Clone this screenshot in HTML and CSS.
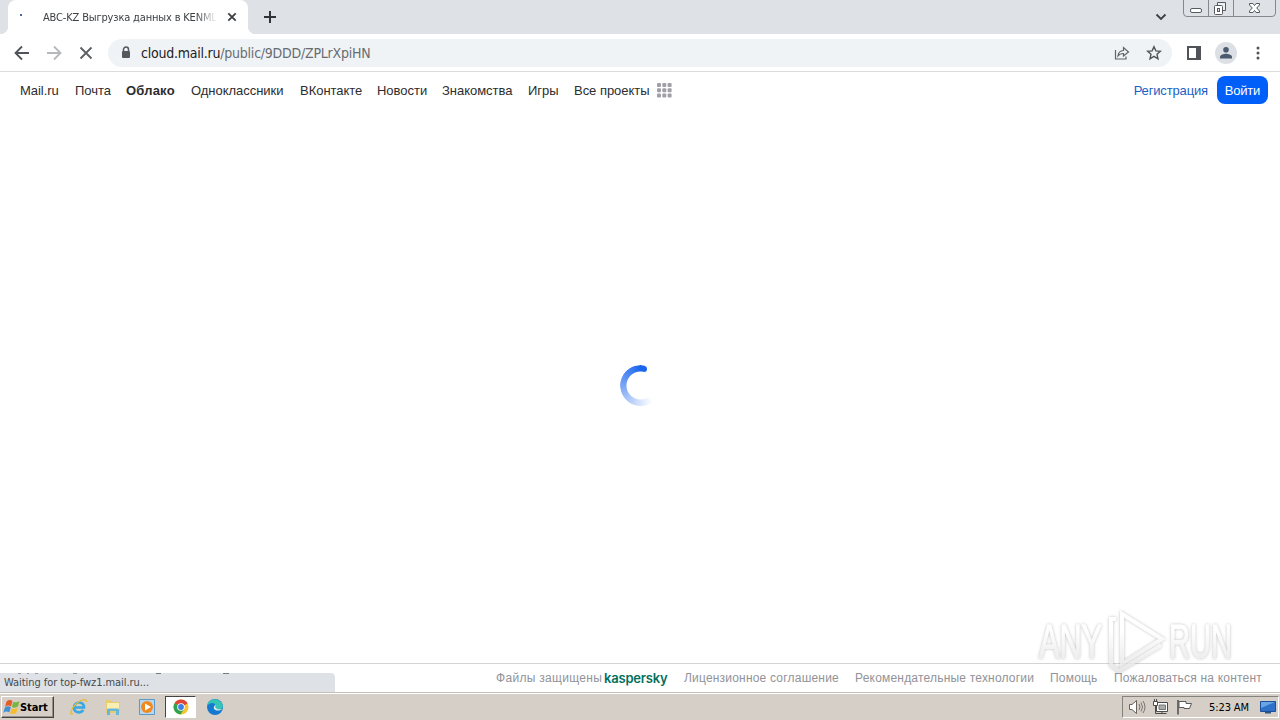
FILE: index.html
```
<!DOCTYPE html>
<html lang="ru">
<head>
    <meta charset="UTF-8">
    <title>ABC-KZ Выгрузка данных в KENML</title>
    <link rel="stylesheet" href="styles.css">
</head>
<body>
    <div class="tabstrip">
        <div class="tab">
            <span class="tab-dot"></span>
            <span class="tab-title">ABC-KZ Выгрузка данных в KENML</span>
            <svg class="tab-close" width="10" height="10" viewBox="0 0 10 10"><path d="M1.3 1.3l7.4 7.4M8.7 1.3L1.3 8.7" stroke="#3c4043" stroke-width="1.8"/></svg>
        </div>
        <svg class="new-tab" width="12" height="12" viewBox="0 0 12 12"><path d="M6 0v12M0 6h12" stroke="#303338" stroke-width="2"/></svg>
        <svg class="tab-search" width="12" height="8" viewBox="0 0 12 8"><path d="M1.5 1.5L6 6l4.500-4.500" fill="none" stroke="#3c4043" stroke-width="1.8"/></svg>
        <svg class="window-buttons" width="94" height="18" viewBox="0 0 94 18">
            <path d="M.5 0v13q0 3.500 3.500 3.500h85q3.500 0 3.500-3.500V0M25.500 0v16M50.500 0v16" fill="none" stroke="#85888e"/>
            <rect x="7.500" y="8.500" width="11" height="4" rx="1.500" fill="#fff" stroke="#575a61"/>
            <path d="M34.500 5V2.500h8v8H40" fill="#eef0f3" stroke="#575a61"/>
            <rect x="31.500" y="5.500" width="8" height="9" rx="1" fill="#fff" stroke="#575a61"/>
            <rect x="34.500" y="8.500" width="2" height="3" fill="#dee1e6" stroke="#575a61"/>
            <path d="M66.500 3.500h3.500l1.500 2 1.500-2h3.500v1.500L73.700 8l2.800 3v1.500H73l-1.500-2-1.500 2h-3.500V11l2.800-3-2.800-3z" fill="#fff" stroke="#575a61"/>
        </svg>
    </div>

    <div class="toolbar">
        <svg class="tool-back" width="16" height="16" viewBox="0 0 16 16"><path d="M15 8H2M8 1.500L1.500 8 8 14.500" fill="none" stroke="#505357" stroke-width="1.8"/></svg>
        <svg class="tool-forward" width="16" height="16" viewBox="0 0 16 16"><path d="M1 8h13M8 1.500L14.500 8 8 14.500" fill="none" stroke="#b6b8ba" stroke-width="1.800"/></svg>
        <svg class="tool-stop" width="14" height="14" viewBox="0 0 14 14"><path d="M1.500 1.500l11 11M12.500 1.500l-11 11" stroke="#5b5e62" stroke-width="1.800"/></svg>
        <div class="address">
            <svg class="lock" width="10" height="13" viewBox="0 0 10 13"><path d="M2.500 6V3.500a2.500 2.500 0 015 0V6" fill="none" stroke="#55595e" stroke-width="1.500"/><rect x="1" y="5" width="8" height="7" rx="1" fill="#55595e"/></svg>
            <span class="url"><span class="host">cloud.mail.ru</span><span class="path">/public/9DDD/ZPLrXpiHN</span></span>
            <svg class="share" width="16" height="14" viewBox="0 0 16 14"><path d="M1.500 4v9h10.500v-2.500M4 10c.3-3.500 2-5.300 5.500-5.500V1.500L14.500 6l-5 4V7.500C7 7.500 5.300 8.200 4 10z" fill="none" stroke="#606368" stroke-width="1.200"/></svg>
            <svg class="star" width="16" height="16" viewBox="0 0 16 16"><path d="M8 1.700l1.900 4.200 4.500.4-3.400 3 1 4.500L8 11.400l-4 2.400 1-4.500-3.400-3 4.500-.4z" fill="none" stroke="#505459" stroke-width="1.400"/></svg>
        </div>
        <svg class="side-panel" width="14" height="14" viewBox="0 0 14 14"><path d="M1 1h12v12H1z" fill="#fff" stroke="#505357" stroke-width="2"/><path d="M9 1h4v12H9z" fill="#505357"/></svg>
        <svg class="profile" width="22" height="22" viewBox="0 0 22 22"><circle cx="11" cy="11" r="11" fill="#dcdfe4"/><circle cx="11" cy="7.700" r="2.800" fill="#4c5a70"/><path d="M5 16.500v-1.500c0-2 4-3.200 6-3.200s6 1.200 6 3.200v1.500z" fill="#4c5a70"/></svg>
        <svg class="dots" width="4" height="14" viewBox="0 0 4 14"><g fill="#505357"><circle cx="2" cy="2" r="1.500"/><circle cx="2" cy="7" r="1.500"/><circle cx="2" cy="12" r="1.500"/></g></svg>
    </div>

    <header class="portal">
        <nav class="portal-nav">
            <a>Mail.ru</a>
            <a>Почта</a>
            <a class="active">Облако</a>
            <a>Одноклассники</a>
            <a>ВКонтакте</a>
            <a>Новости</a>
            <a>Знакомства</a>
            <a>Игры</a>
            <a>Все проекты</a>
        </nav>
        <svg class="projects" width="15" height="15" viewBox="0 0 15 15"><g fill="#a0a0a6"><rect width="4" height="4" rx="1"/><rect x="5.300" width="4" height="4" rx="1"/><rect x="10.600" width="4" height="4" rx="1"/><rect y="5.300" width="4" height="4" rx="1"/><rect x="5.300" y="5.300" width="4" height="4" rx="1"/><rect x="10.600" y="5.300" width="4" height="4" rx="1"/><rect y="10.600" width="4" height="4" rx="1"/><rect x="5.300" y="10.600" width="4" height="4" rx="1"/><rect x="10.600" y="10.600" width="4" height="4" rx="1"/></g></svg>
        <a class="register">Регистрация</a>
        <a class="login">Войти</a>
    </header>

    <main class="content">
        <div class="spinner"></div>
    </main>

    <footer class="footer">
        <span class="secured">Файлы защищены</span>
        <span class="kaspersky">kaspersky</span>
        <a class="license">Лицензионное соглашение</a>
        <a class="recommend">Рекомендательные технологии</a>
        <a class="help">Помощь</a>
        <a class="report">Пожаловаться на контент</a>
        <div class="status">Waiting for top-fwz1.mail.ru...</div>
    </footer>

    <svg class="watermark" width="210" height="74" viewBox="0 0 210 74">
        <defs>
            <linearGradient id="wm" x1="0" y1="0" x2="0" y2="1"><stop offset="0.3" stop-color="#fff"/><stop offset="1" stop-color="#e4e4e4"/></linearGradient>
            <filter id="glow" x="-10%" y="-10%" width="120%" height="120%"><feDropShadow dx="0" dy="0" stdDeviation="1.500" flood-color="#888" flood-opacity=".65"/></filter>
        </defs>
        <g filter="url(#glow)">
            <text class="wm-text" x="7" y="52" textLength="63" lengthAdjust="spacingAndGlyphs">ANY</text>
            <text class="wm-text" x="137" y="52" textLength="63" lengthAdjust="spacingAndGlyphs">RUN</text>
            <path d="M90 8l40 25-40 25zM84 13h-5v46l8 6 42-26" fill="none" stroke="url(#wm)" stroke-width="4"/>
        </g>
    </svg>

    <div class="taskbar">
        <div class="start">
            <svg width="17" height="16" viewBox="0 0 17 16"><path d="M3.500 2.500q3-2.500 6-.5L8 7.500q-3-2-6 .5z" fill="#e35c29"/><path d="M10.300 2.700q3 1.500 6.200-.7L15 7.500q-3 2-6.200.5z" fill="#78b641"/><path d="M1.800 8.700q3-2.500 6-.5l-1.500 5.300q-3-2-6 .5z" fill="#438fd0"/><path d="M8.600 9q3 2 6.200-.5l-1.500 5.500q-3 2-6.200.2z" fill="#f5bd2e"/></svg>
            <span>Start</span>
        </div>
        <svg class="app ie" width="18" height="18" viewBox="0 0 18 18"><path d="M4 9.500h10c.3-6.700-9.700-6.700-10 0 0 5.600 7 6.200 9.300 2.500" fill="none" stroke="#36a9e4" stroke-width="2.600"/><path d="M3 15.500C-1 18 .5 11 6 6s11-6 10.500-2" fill="none" stroke="#e7b936" stroke-width="1.300"/></svg>
        <svg class="app folder" width="18" height="18" viewBox="0 0 18 18"><path d="M2 2h5l1 2h8v11H2z" fill="#e9cc70"/><path d="M3 5h12v6H3z" fill="#faefb2"/><path d="M3 17v-5q0-1.500 1.500-1.500h9q1.500 0 1.500 1.500v5h-3v-4H6v4z" fill="#67b7d8"/></svg>
        <svg class="app media" width="18" height="18" viewBox="0 0 18 18"><path d="M1.500 1.500h15v15h-15z" fill="#b9d8ee" stroke="#5b9ac8"/><circle cx="9" cy="9" r="6" fill="#f08a20"/><path d="M7 5.500l6 3.500-6 3.500z" fill="#fff"/></svg>
        <div class="running">
            <svg width="16" height="16" viewBox="0 0 16 16"><circle cx="8" cy="8" r="7.500" fill="#f7c52c"/><path d="M8 8L1.500 4.250A7.500 7.500 0 0114.500 4.250z" fill="#df4538"/><path d="M8 8L1.500 4.250A7.500 7.500 0 007.500 15.500L11 10z" fill="#31a252"/><path d="M8 4.250h6.500L8 8z" fill="#df4538"/><circle cx="8" cy="8" r="3.800" fill="#fff"/><circle cx="8" cy="8" r="2.900" fill="#3d80e8"/></svg>
        </div>
        <svg class="app edge" width="18" height="18" viewBox="0 0 18 18"><circle cx="9" cy="9" r="8" fill="#1479cf"/><path d="M1 8C2 1 10-1 15 4c3 4 2 7-2 7.500-3 .2-4-1-3-3C9 4 4 4 1 8z" fill="#35c5b5"/><path d="M10 7c-1.500 3 .5 5 6.500 4-1.500 1.500-6 2.500-8.500 0C7.200 9 8.500 7 10 7z" fill="#d4e8ee"/></svg>
        <div class="tray">
            <svg class="volume" width="18" height="16" viewBox="0 0 18 16"><path d="M1.500 5.500H4L8.500 1.500v13L4 10.500H1.500z" fill="#fff" stroke="#66635f"/><path d="M11 5q2 3 0 6M13 3.500q3 4.500 0 9M15 2q4 6 0 12" fill="none" stroke="#77736e"/></svg>
            <svg class="network" width="18" height="16" viewBox="0 0 18 16"><path d="M4.500 3.500h11v9h-11z" fill="#fff" stroke="#4b4b4b"/><path d="M7 6h6.500v4.500H7z" fill="#aaa" stroke="#777"/><path d="M1.500 2.500h4v4h-4zM2.500 0v3M4.500 0v3" fill="#fff" stroke="#4b4b4b"/><path d="M3.500 7v7.500h11M10 13v2" fill="none" stroke="#4b4b4b"/></svg>
            <svg class="flag" width="18" height="16" viewBox="0 0 18 16"><path d="M2 1v14.500" stroke="#4b4b4b" stroke-width="1.500"/><path d="M3 2.500h7v2h5.500l-2 5H8v-1H3z" fill="#fff" stroke="#5a5a5a"/></svg>
            <span class="clock">5:23 AM</span>
            <svg class="desktop" width="16" height="14" viewBox="0 0 16 14"><path d="M.5 1.500h15v10H.5z" fill="#2f70c9" stroke="#1d4e99"/><path d="M1 2h14L1 8z" fill="#69a5e4"/><path d="M5 12h6v1.500H5z" fill="#31557f"/></svg>
        </div>
    </div>
</body>
</html>
```

FILE: styles.css
```
* {
    box-sizing: border-box;
}
body {
    margin: 0;
    width: 1280px;
    height: 720px;
    overflow: hidden;
    display: flex;
    flex-direction: column;
    background: #fff;
    font-family: "Liberation Sans", Arial, sans-serif;
    font-size: 13px;
    color: #2c2d2e;
}
svg {
    display: block;
    flex: none;
}
a, span {
    white-space: nowrap;
}

/* browser window */
.tabstrip {
    display: flex;
    align-items: center;
    height: 34px;
    padding-left: 8px;
    background: #dee1e6;
}
.tab {
    position: relative;
    display: flex;
    align-items: center;
    width: 240px;
    height: 34px;
    padding-left: 12px;
    background: #fff;
    border-radius: 8px 8px 0 0;
}
.tab::before, .tab::after {
    content: "";
    position: absolute;
    bottom: 0;
    width: 8px;
    height: 8px;
}
.tab::before {
    left: -8px;
    background: radial-gradient(circle at 0 0, #dee1e6 8px, #fff 8.5px);
}
.tab::after {
    right: -8px;
    background: radial-gradient(circle at 100% 0, #dee1e6 8px, #fff 8.5px);
}
.tab-dot {
    width: 2px;
    height: 2px;
    margin: 0 21px 4px 0;
    background: #4c6a9e;
}
.tab-title {
    width: 174px;
    overflow: hidden;
    font-family: "DejaVu Sans Condensed", "DejaVu Sans", sans-serif;
    font-size: 11px;
    letter-spacing: -0.16px;
    color: #3c4043;
    -webkit-mask-image: linear-gradient(90deg, #000 88%, transparent);
}
.tab-close {
    margin-left: 10px;
}
.new-tab {
    margin-left: 16px;
}
.tab-search {
    margin-left: auto;
}
.window-buttons {
    align-self: flex-start;
    margin: 0 3px 0 16px;
}
.toolbar {
    display: flex;
    align-items: center;
    height: 38px;
    padding: 0 20px 0 14px;
    border-bottom: 1px solid #dadcde;
}
.tool-forward {
    margin-left: 16px;
}
.tool-stop {
    margin-left: 17px;
}
.address {
    display: flex;
    align-items: center;
    width: 1064px;
    height: 28px;
    margin-left: 15px;
    padding: 0 10px 0 13px;
    border-radius: 14px;
    background: #f0f3f5;
}
.url {
    margin-left: 10px;
    font-family: "DejaVu Sans Condensed", "DejaVu Sans", sans-serif;
    font-size: 14px;
    letter-spacing: -0.23px;
}
.host {
    color: #202124;
}
.path {
    color: #686c71;
}
.share {
    margin-left: auto;
}
.star {
    margin-left: 16px;
}
.side-panel {
    margin-left: 15px;
}
.profile {
    margin-left: 14px;
}
.dots {
    margin-left: auto;
}

/* mail.ru header */
.portal {
    display: flex;
    align-items: center;
    height: 36px;
    padding: 0 12px 0 20px;
}
.portal-nav {
    display: grid;
    grid-template-columns: 39px 35px 49px 93px 61px 49px 70px 30px 75px;
    gap: 16px;
    letter-spacing: -0.03px;
}
.active {
    font-weight: bold;
    letter-spacing: 0.2px;
}
.projects {
    margin-left: 8px;
}
.register {
    margin-left: auto;
    color: #1a5fc4;
    letter-spacing: -0.15px;
}
.login {
    width: 51px;
    height: 28px;
    margin-left: 9px;
    border-radius: 8px;
    background: #005ff9;
    color: #fff;
    line-height: 29px;
    text-align: center;
    letter-spacing: -0.2px;
}
.content {
    display: flex;
    justify-content: center;
    height: 555px;
    padding-top: 257px;
}
.spinner {
    position: relative;
    width: 41px;
    height: 41px;
    border-radius: 50%;
    background: conic-gradient(#1b66ed 0 12deg, transparent 13deg 140deg, rgba(60, 120, 240, 0.22) 185deg, #1b66ed 360deg);
    -webkit-mask: radial-gradient(circle, transparent 13.5px, #000 14.5px);
}
.spinner::after {
    content: "";
    position: absolute;
    left: 21px;
    top: 1px;
    width: 6px;
    height: 6px;
    border-radius: 50%;
    background: #1b66ed;
}
.footer {
    position: relative;
    display: flex;
    align-items: center;
    height: 29px;
    padding-left: 496px;
    border-top: 1px solid #d3d4d6;
    color: #919399;
    font-size: 12px;
    letter-spacing: 0.2px;
}
.secured {
    width: 108px;
    margin-top: -1px;
    letter-spacing: 0.3px;
}
.kaspersky {
    width: 80px;
    color: #00705c;
    font-family: Inter, sans-serif;
    font-size: 13px;
    font-weight: 600;
    letter-spacing: -0.2px;
}
.license {
    width: 171px;
}
.recommend {
    width: 195px;
}
.help {
    width: 64px;
}
.status {
    position: absolute;
    left: 0;
    bottom: 0;
    width: 335px;
    height: 19px;
    padding-left: 4px;
    border-top-right-radius: 4px;
    background: #dee1e6;
    color: #45494d;
    font-family: "DejaVu Sans Condensed", "DejaVu Sans", sans-serif;
    font-size: 11px;
    line-height: 20px;
    letter-spacing: -0.06px;
}
/* page links showing through above the status bubble */
.status::before {
    content: "";
    position: absolute;
    left: 18px;
    top: 0;
    width: 211px;
    height: 1px;
    background: linear-gradient(90deg, #9a9da1 3px, transparent 3px 9px, #9a9da1 9px 11px, transparent 11px 17px, #9a9da1 17px 20px, transparent 20px 55px, #9a9da1 55px 59px, transparent 59px 138px, #777a7e 138px 143px, transparent 143px 205px, #777a7e 205px 211px);
}
.watermark {
    position: absolute;
    left: 1032px;
    top: 606px;
    opacity: 0.85;
}
.wm-text {
    font-family: "Liberation Sans", sans-serif;
    font-size: 48px;
    fill: url(#wm);
    stroke: url(#wm);
    stroke-width: 1px;
}

/* taskbar */
.taskbar {
    display: flex;
    align-items: center;
    height: 28px;
    padding: 1px 1px 0;
    background: #d6cfc7;
    border-top: 1px solid #c4c0b8;
    box-shadow: inset 0 1px #fff;
    font-family: "DejaVu Sans Condensed", "DejaVu Sans", sans-serif;
    font-size: 11px;
    color: #000;
}
.start {
    display: flex;
    align-items: center;
    width: 53px;
    height: 22px;
    padding-left: 1px;
    border: 1px solid;
    border-color: #fff #444 #444 #fff;
    box-shadow: inset -1px -1px #969088;
    font-weight: bold;
    letter-spacing: -0.1px;
}
.ie {
    margin-left: 16px;
}
.folder, .media {
    margin-left: 16px;
}
.running {
    display: flex;
    align-items: center;
    justify-content: center;
    width: 31px;
    height: 22px;
    margin-left: 9px;
    border: 1px solid;
    border-color: #444 #fff #fff #444;
    background: #fff;
}
.edge {
    margin-left: 10px;
}
.tray {
    display: flex;
    align-items: center;
    width: 157px;
    height: 22px;
    margin-left: auto;
    padding-left: 5px;
    border: 1px solid;
    border-color: #85817b #fff #fff #85817b;
}
.network {
    margin-left: 6px;
}
.flag {
    margin-left: 6px;
}
.clock {
    width: 43px;
    margin-left: 15px;
    letter-spacing: -0.1px;
}
.desktop {
    margin-left: 8px;
}
```
